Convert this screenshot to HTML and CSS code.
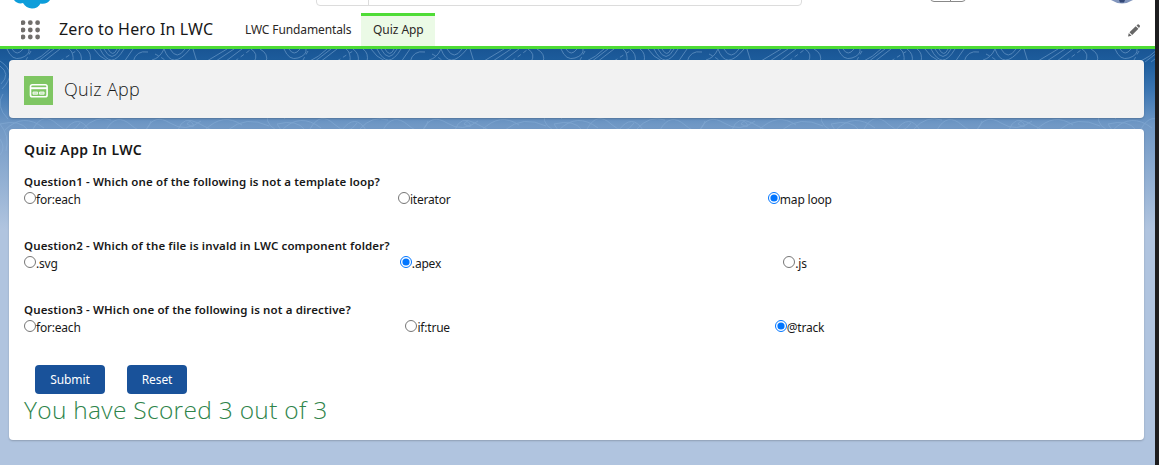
FILE: index.html
```
<!DOCTYPE html>
<html lang="en">
<head>
<meta charset="utf-8">
<title>Quiz App</title>
<link rel="stylesheet" href="styles.css">
</head>
<body>
<div class="app">
  <header class="header">
    <svg class="logo" width="44" height="10" viewBox="0 0 44 10"><path d="M4 0C6 3 10 4 13 3c2 3 5 5.500 9 5.500s7-2 8.500-5c4 1 8-1 9.500-3.500z" fill="#0d9dda"/></svg>
    <div class="search"><span class="search-scope"></span></div>
    <div class="actions"><i></i><i></i></div>
    <svg class="avatar" width="24" height="5" viewBox="0 0 24 5"><path d="M1 0q11 7 22 0z" fill="#8296bd"/><path d="M9 0h6l-1 2.500h-4z" fill="#334776"/></svg>
    <nav class="nav">
      <svg class="waffle" width="20" height="20" viewBox="0 0 20 20" fill="#706e6b"><circle cx="2" cy="2.700" r="2.400"/><circle cx="9.300" cy="2.700" r="2.400"/><circle cx="16.600" cy="2.700" r="2.400"/><circle cx="2" cy="10" r="2.400"/><circle cx="9.300" cy="10" r="2.400"/><circle cx="16.600" cy="10" r="2.400"/><circle cx="2" cy="17" r="2.400"/><circle cx="9.300" cy="17" r="2.400"/><circle cx="16.600" cy="17" r="2.400"/></svg>
      <span class="app-name">Zero to Hero In LWC</span>
      <a class="tab first">LWC Fundamentals</a>
      <a class="tab active">Quiz App</a>
      <svg class="pencil" width="12" height="13" viewBox="0 0 12 13" fill="#666"><path d="M0 12.500l.8-3.400 2.700 2.600zM1.500 8.300L7.700 2.200l2.700 2.600-6.200 6.200zM8.500 1.500L9.600.5q.6-.5 1.200 0l1 1q.5.600 0 1.200l-.8 1.300z"/></svg>
    </nav>
  </header>
  <main class="main">
    <svg class="topo" width="1155" height="190">
      <defs>
        <pattern id="contours" width="277" height="190" patternUnits="userSpaceOnUse" fill="none" stroke="#a8cbed">
          <path d="M7 0Q12 12 21 9T29 0M12 0q5 8 11 0M31 13Q42 8 50 0M37 13L54 0M43 13L60 0M69 0q5 3 4 13M76 0q7 5 5 13M86 0q6 4 4 13M94 0q5 8 14 12M100 0q11 22 24 0M104 0q8 15 16 0M108 0q5 9 9 0M124 13l9-13M133 13q3-12 15-10M152 11q8-2 12-11M164 0q8 22 26 0M170 0q7 12 15 0M193 0l4 13M207 12l20-12M216 12L234 0M226 12l16-12M251 0q8 5 3 13M260 0q9 5 6 13"/>
          <path d="M60 12L76 2M155 5q8 4 12 8M235 12l15-11M31 2l-5 9" stroke-dasharray="4 3"/>
          <path d="M0 75Q20 70 28 81M5 81q18-18 39-2M33 80q10-18 24-5T80 74M65 81Q78 64 89 81M83 80q12-14 28-9M106 81q10-18 25-5T151 72M146 81q8-17 24-7T201 72M178 81q5-15 20-7t15 7M205 81q18-18 37-5M228 81q18-15 41-4M187 75q3-5 6 0t-6 0"/>
          <path d="M0 17q11 8 1 18M0 12q18 12 2 28M3 45q-8 12 5 25M0 75q10 12 6 27M0 90q6 9 0 16M268 12q-6 10 7 17M260 37q16-9 12 8t-14-2M270 60q-8 13 6 21M263 90q12-6 14 10"/>
        </pattern>
        <linearGradient id="fade" x1="0" y1="0" x2="0" y2="1"><stop offset="0" stop-color="#fff"/><stop offset="1" stop-color="#000"/></linearGradient>
        <mask id="veil"><rect width="1155" height="190" fill="url(#fade)"/></mask>
      </defs>
      <rect width="1155" height="190" fill="url(#contours)" mask="url(#veil)" opacity=".4"/>
    </svg>
    <section class="card page-header">
      <svg class="page-icon" width="29" height="29" viewBox="0 0 29 29"><rect width="29" height="29" fill="#7fc663"/><rect x="6.500" y="8.700" width="16.600" height="12" rx="1.800" fill="none" stroke="#fff" stroke-width="1.600"/><path d="M6.500 12.200h16.600" stroke="#fff" stroke-width="2"/><path d="M9 16h4.600v2.200H9zM15.500 16h4.600v2.200h-4.600z" fill="#c4e5b7" stroke="#fff" stroke-width=".8"/></svg>
      <h1 class="page-title">Quiz App</h1>
    </section>
    <section class="card quiz">
      <h2 class="quiz-title">Quiz App In LWC</h2>
      <form>
        <div class="question">
          <p class="prompt">Question1 - Which one of the following is not a template loop?</p>
          <div class="options"><label><input type="radio" name="q1"><span>for:each</span></label><label><input type="radio" name="q1"><span>iterator</span></label><label><input type="radio" name="q1" checked><span>map loop</span></label></div>
        </div>
        <div class="question">
          <p class="prompt">Question2 - Which of the file is invald in LWC component folder?</p>
          <div class="options"><label><input type="radio" name="q2"><span>.svg</span></label><label><input type="radio" name="q2" checked><span>.apex</span></label><label><input type="radio" name="q2"><span>.js</span></label></div>
        </div>
        <div class="question">
          <p class="prompt">Question3 - WHich one of the following is not a directive?</p>
          <div class="options"><label><input type="radio" name="q3"><span>for:each</span></label><label><input type="radio" name="q3"><span>if:true</span></label><label><input type="radio" name="q3" checked><span>@track</span></label></div>
        </div>
        <div class="buttons"><button type="button" class="btn submit">Submit</button><button type="button" class="btn reset">Reset</button></div>
      </form>
      <p class="score">You have Scored 3 out of 3</p>
    </section>
  </main>
</div>
</body>
</html>
```
FILE: styles.css
```
* { box-sizing: border-box; }
body { margin: 0; background: #1d1d1f; font-family: "Noto Sans", "Open Sans", sans-serif; font-size: 12px; color: #181818; overflow: hidden; }
h1, h2, p { margin: 0; font-weight: 400; white-space: nowrap; }
.app { width: 1155px; height: 465px; display: flex; flex-direction: column; }
.header { position: relative; height: 49px; background: #fff; border-bottom: 3px solid #4fdc36; padding-top: 13px; flex: none; }
.logo { position: absolute; left: 10px; top: 0; }
.search { position: absolute; left: 316px; top: -10px; width: 486px; height: 16px; border: 1px solid #dcdcdc; border-radius: 4px; }
.search-scope { display: block; width: 52px; height: 14px; border-right: 1px solid #dcdcdc; }
.actions { position: absolute; left: 930px; top: -8px; display: flex; }
.actions i { width: 21px; height: 10px; border: 1px solid #888; border-radius: 0 0 0 4px; }
.actions i + i { width: 16px; margin-left: -1px; border-radius: 0 0 4px 0; }
.avatar { position: absolute; left: 1110px; top: 0; }
.nav { display: flex; height: 33px; align-items: center; padding-left: 21px; }
.waffle { flex: none; }
.app-name { width: 186px; padding-left: 18px; font-size: 16px; letter-spacing: .15px; line-height: 33px; white-space: nowrap; }
.tab { font-size: 12px; letter-spacing: -.12px; line-height: 33px; height: 33px; white-space: nowrap; color: #2b2826; }
.tab.first { width: 134px; padding-left: 18px; }
.tab.active { width: 74px; padding-left: 12px; background: #ebfae6; border-top: 3px solid #4fdc36; line-height: 27px; letter-spacing: -.05px; }
.pencil { margin-left: auto; margin-right: 15px; margin-top: 2px; }
.main { position: relative; flex: 1; padding: 11px 11px 0 9px; background: linear-gradient(#195594 0, #1e5e9e 14px, #3c76b2 42px, #7098c5 76px, #b0c4df 180px, #b0c4df); }
.topo { position: absolute; left: 0; top: 0; }
.card { position: relative; border-radius: 4px; box-shadow: 0 1px 2px rgba(0,0,0,.2); }
.page-header { height: 58px; background: #f2f2f2; display: flex; align-items: center; padding: 2px 0 0 15px; gap: 11px; }
.page-title { font-family: "Open Sans", "Noto Sans", sans-serif; font-weight: 300; font-size: 18px; letter-spacing: .3px; line-height: 28px; margin-top: -2px; }
.quiz { height: 311px; margin-top: 11px; background: #fff; padding: 10px 0 0 15px; }
.quiz-title { font-size: 14px; letter-spacing: .4px; font-weight: 600; line-height: 22px; }
.question { margin-top: 12px; height: 52px; }
.prompt { font-size: 11.500px; letter-spacing: .13px; font-weight: 600; line-height: 18px; }
.options { display: flex; width: 1125px; height: 18px; }
.options label { flex: 1 1 auto; display: flex; align-items: center; font-size: 12px; letter-spacing: -.2px; line-height: 18px; }
.options span { margin-top: -1px; }
.options input { width: 12px; height: 12px; margin: -4px 0 0; }
.buttons { display: flex; gap: 22px; padding-left: 11px; margin-top: 12px; }
.btn { height: 29px; border: 0; border-radius: 4px; background: #19529a; color: #fff; font: 12px "Noto Sans", sans-serif; letter-spacing: -.1px; padding: 0 0 1px; }
.submit { width: 70px; }
.reset { width: 60px; }
.score { font-family: "Open Sans", "Noto Sans", sans-serif; font-weight: 300; font-size: 24.500px; letter-spacing: .3px; line-height: 32px; color: #2e844a; }
```
